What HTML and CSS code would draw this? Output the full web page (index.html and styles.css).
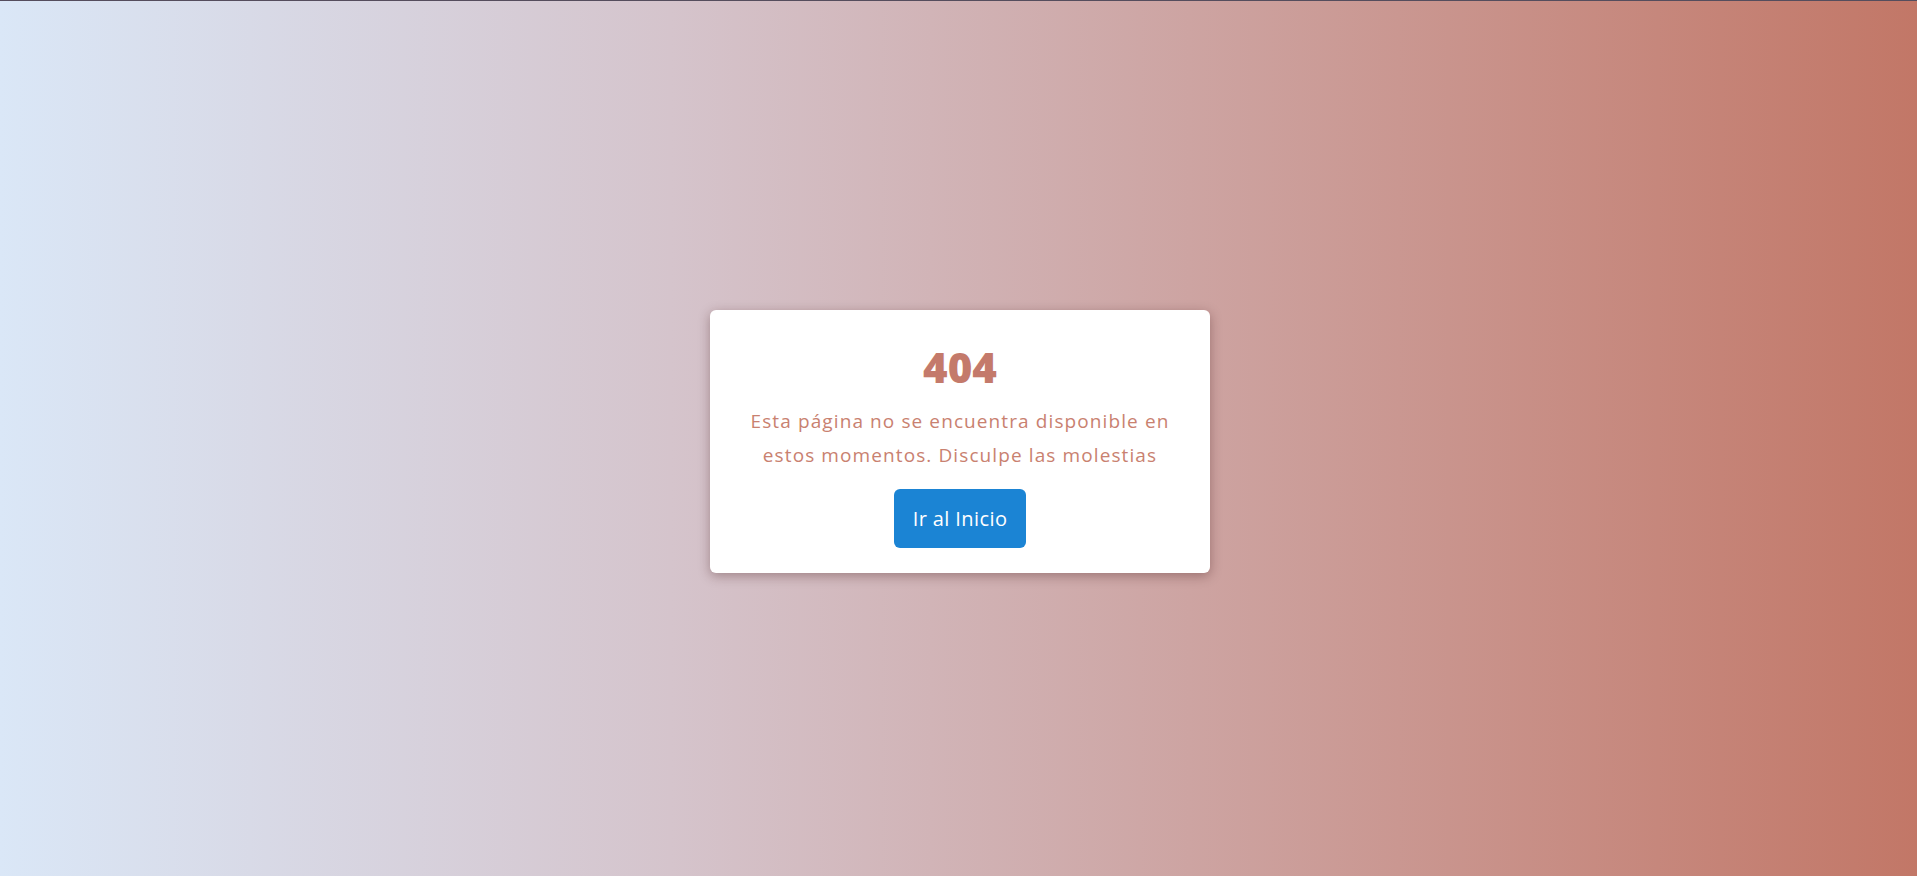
FILE: index.html
```html
<!DOCTYPE html>
<html lang="es">
<head>
<meta charset="utf-8">
<title>404</title>
<link rel="stylesheet" href="styles.css">
</head>
<body>
<main class="page">
  <section class="card">
    <h1 class="code">404</h1>
    <p class="message">Esta página no se encuentra disponible en estos momentos. Disculpe las molestias</p>
    <a class="btn" href="#">Ir al Inicio</a>
  </section>
</main>
</body>
</html>
```
FILE: styles.css
```css
html, body {
  margin: 0;
  padding: 0;
  height: 100%;
}
body {
  font-family: "Open Sans", "Noto Sans", sans-serif;
  background: linear-gradient(to right, #dae7f7 0%, #d5c4cc 35%, #c27767 100%);
  border-top: 1px solid #554d5d;
  box-sizing: border-box;
}
.page {
  height: 100%;
  box-sizing: border-box;
  padding: 5px 0 0 3px;
  display: flex;
  align-items: center;
  justify-content: center;
}
.card {
  width: 500px;
  box-sizing: border-box;
  background: #fff;
  border-radius: 6px;
  box-shadow: 0 3px 12px rgba(60, 20, 20, 0.35);
  padding: 32px 37px 25px;
  display: flex;
  flex-direction: column;
  align-items: center;
  text-align: center;
}
.code {
  margin: 0;
  font-size: 42px;
  font-weight: 800;
  line-height: 50px;
  color: #c47a6b;
}
.message {
  margin: 12px 0 17px;
  font-size: 19px;
  line-height: 34px;
  letter-spacing: 1.1px;
  color: #c98170;
}
.btn {
  display: inline-flex;
  align-items: center;
  justify-content: center;
  width: 132px;
  height: 59px;
  background: #1b84d4;
  color: #fff;
  text-decoration: none;
  font-size: 20px;
  letter-spacing: 0.4px;
  border-radius: 6px;
}
```
